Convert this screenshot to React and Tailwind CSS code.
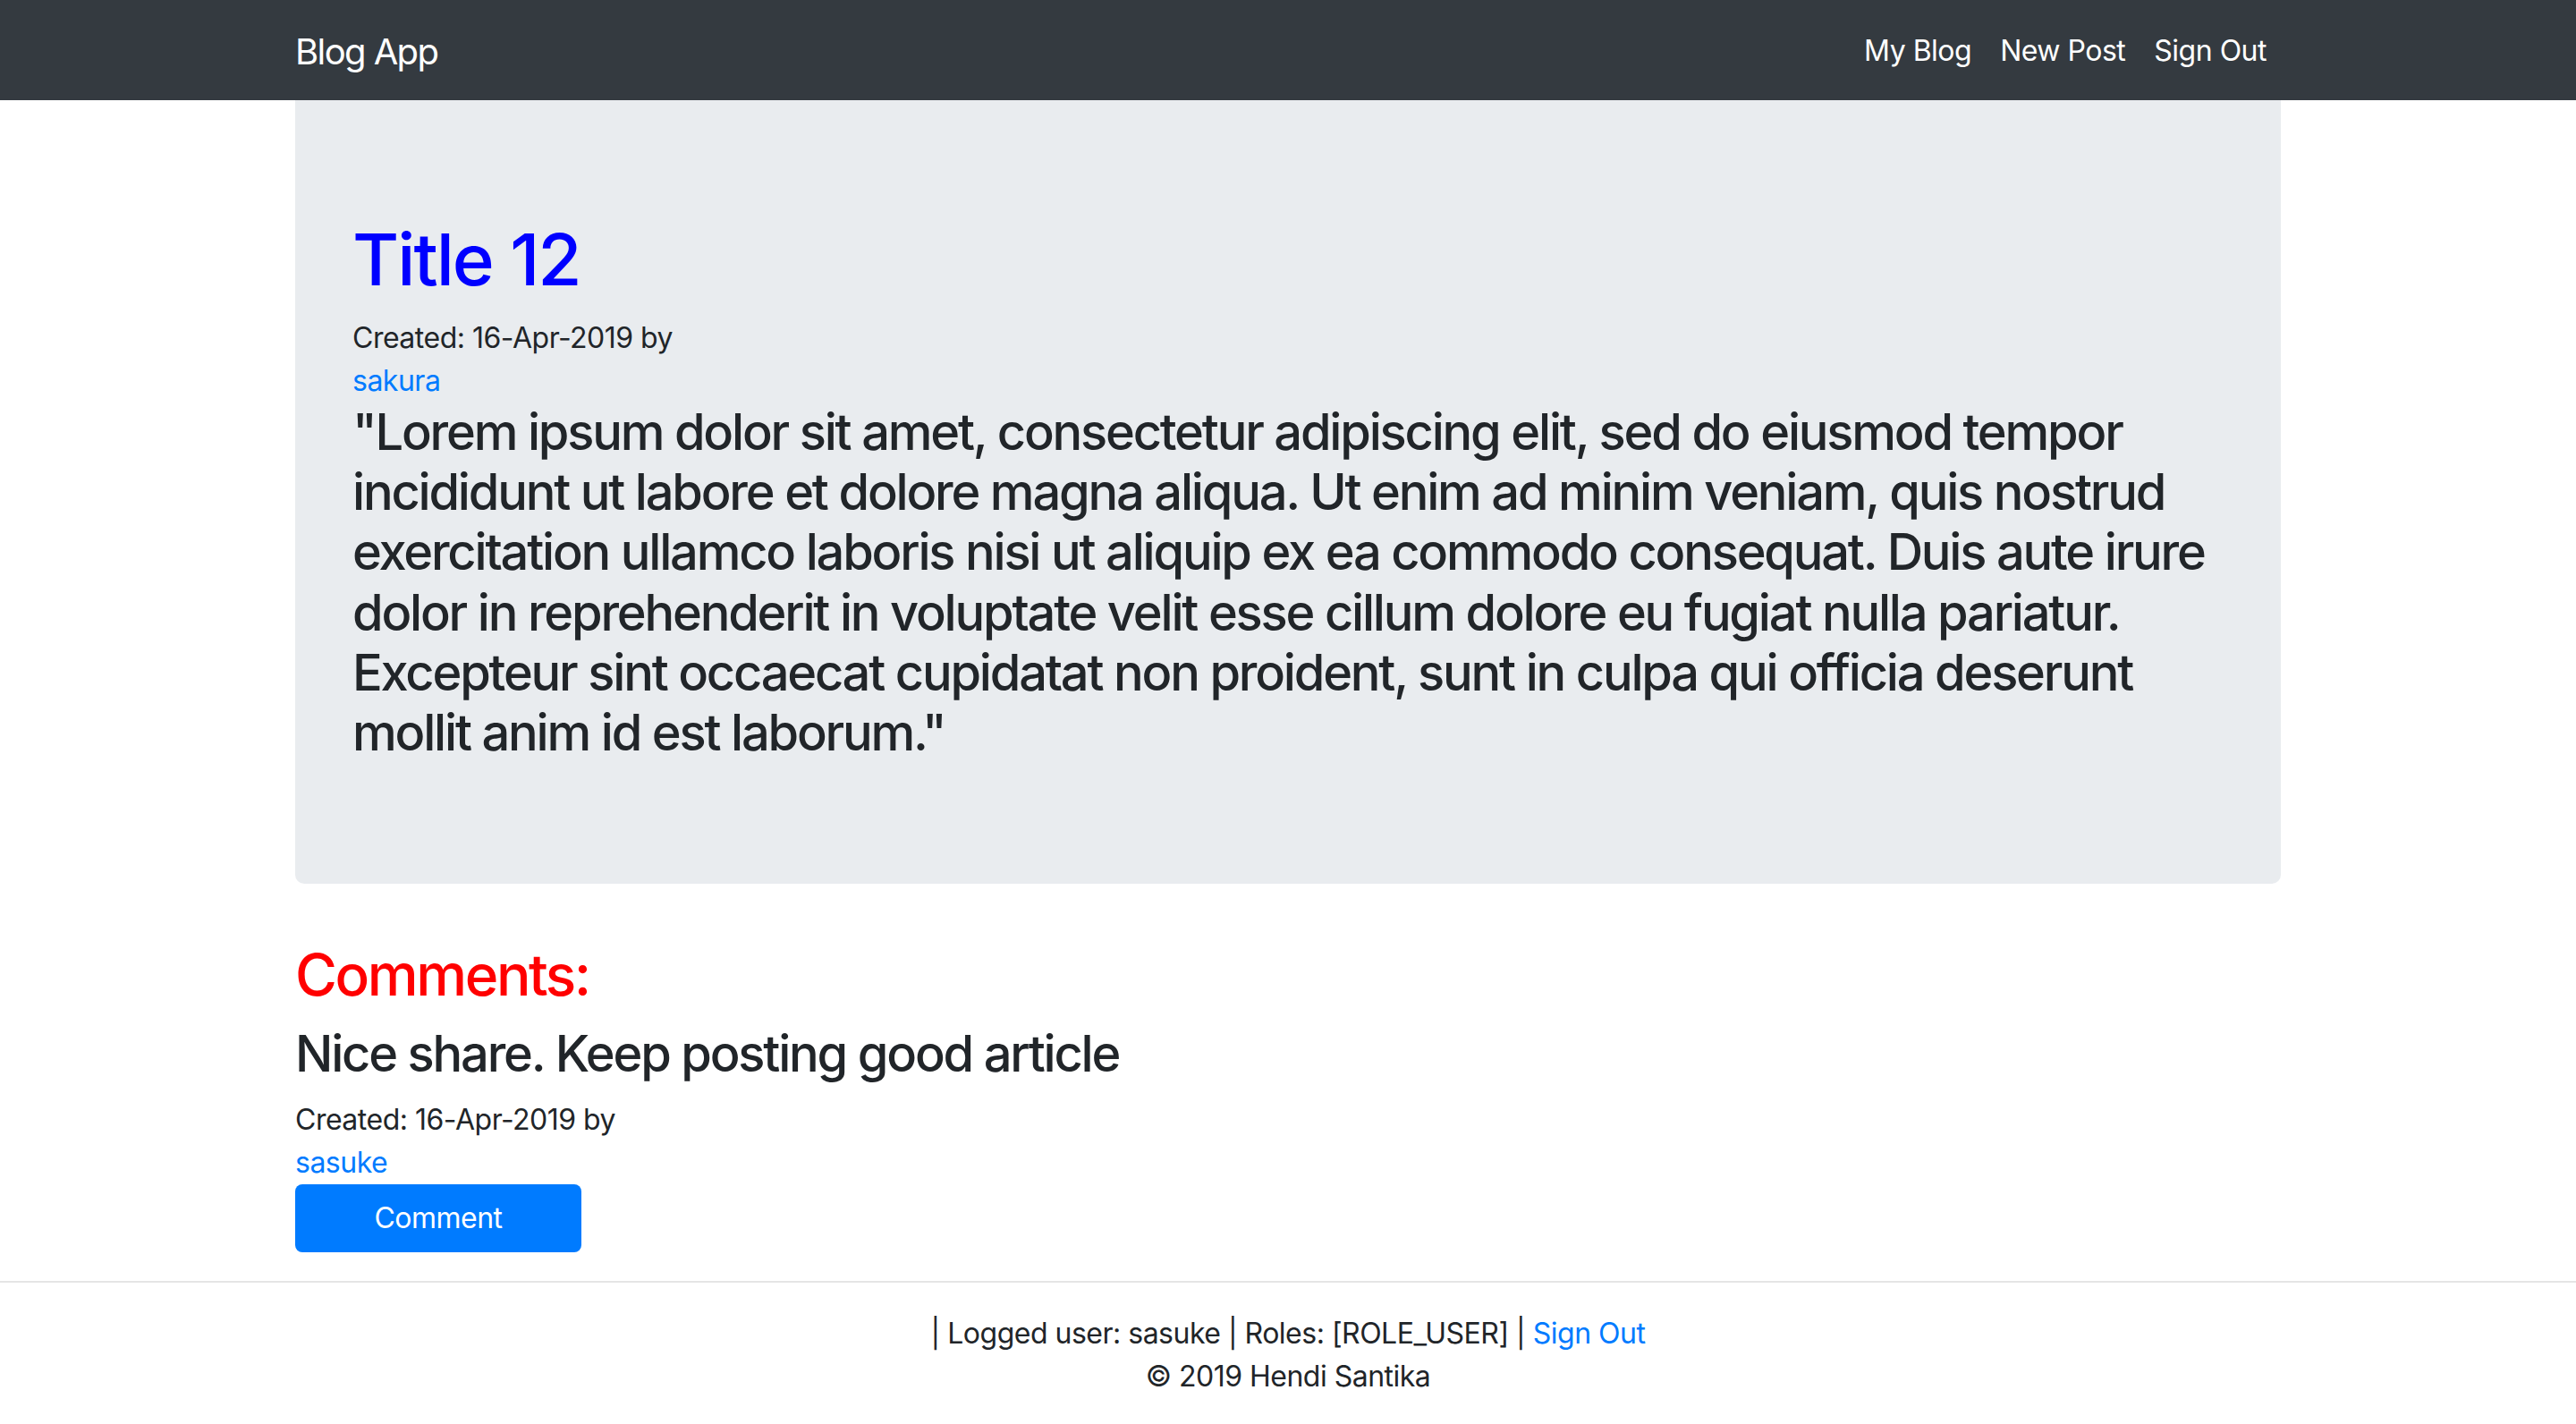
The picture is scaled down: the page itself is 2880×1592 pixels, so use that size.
export default function App() {
  return (
    <div className="min-h-screen bg-white font-['Inter','Liberation_Sans',sans-serif] text-[32px] leading-[48px] tracking-[-0.5px] text-[#212529]">
      {/* Navbar */}
      <nav className="bg-[#343a40] h-[112px] flex items-center">
        <div className="w-[2280px] mx-auto px-[30px] flex items-center justify-between">
          <a className="text-white text-[40px] leading-[60px] tracking-[-1.6px] pt-[12px] pb-[8px]">Blog App</a>
          <div className="flex items-center pt-[2px]">
            <a className="text-white px-[16px] py-[16px]">My Blog</a>
            <a className="text-white px-[16px] py-[16px]">New Post</a>
            <a className="text-white px-[16px] py-[16px]">Sign Out</a>
          </div>
        </div>
      </nav>

      <main className="w-[2280px] mx-auto px-[30px]">
        {/* Post jumbotron */}
        <div className="bg-[#e9ecef] rounded-b-[10px] pt-[130px] pb-[119px] px-[64px] mb-[64px]">
          <h1 className="text-[80px] leading-[96px] tracking-[-2px] font-medium text-[#0000ff] mb-[16px]">Title 12</h1>
          <div>Created: 16-Apr-2019 by</div>
          <a className="block text-[#007bff]">sakura</a>
          <h3 className="text-[56px] leading-[67.2px] tracking-[-2.2px] font-medium mb-[16px]">
            "Lorem ipsum dolor sit amet, consectetur adipiscing elit, sed do eiusmod tempor incididunt ut labore et dolore magna aliqua. Ut enim ad minim veniam, quis nostrud exercitation ullamco laboris nisi ut aliquip ex ea commodo consequat. Duis aute irure dolor in reprehenderit in voluptate velit esse cillum dolore eu fugiat nulla pariatur. Excepteur sint occaecat cupidatat non proident, sunt in culpa qui officia deserunt mollit anim id est laborum."
          </h3>
        </div>

        {/* Comments */}
        <h2 className="text-[64px] leading-[76.8px] tracking-[-2.4px] font-medium text-[#ff0000] mb-[16px]">Comments:</h2>
        <h3 className="text-[56px] leading-[67.2px] tracking-[-2.2px] font-medium mb-[16px]">Nice share. Keep posting good article</h3>
        <div>Created: 16-Apr-2019 by</div>
        <a className="block text-[#007bff]">sasuke</a>
        <button className="w-[320px] h-[76px] rounded-[8px] bg-[#007bff] text-white text-[32px] leading-[48px]">
          Comment
        </button>
      </main>

      {/* Footer */}
      <footer className="mt-[32px] border-t-2 border-[#e5e5e5] pt-[33px] pb-[29px] text-center">
        <div>
          | Logged user: sasuke | Roles: [ROLE_USER] | <a className="text-[#007bff]">Sign Out</a>
        </div>
        <div>© 2019 Hendi Santika</div>
      </footer>
    </div>
  );
}
